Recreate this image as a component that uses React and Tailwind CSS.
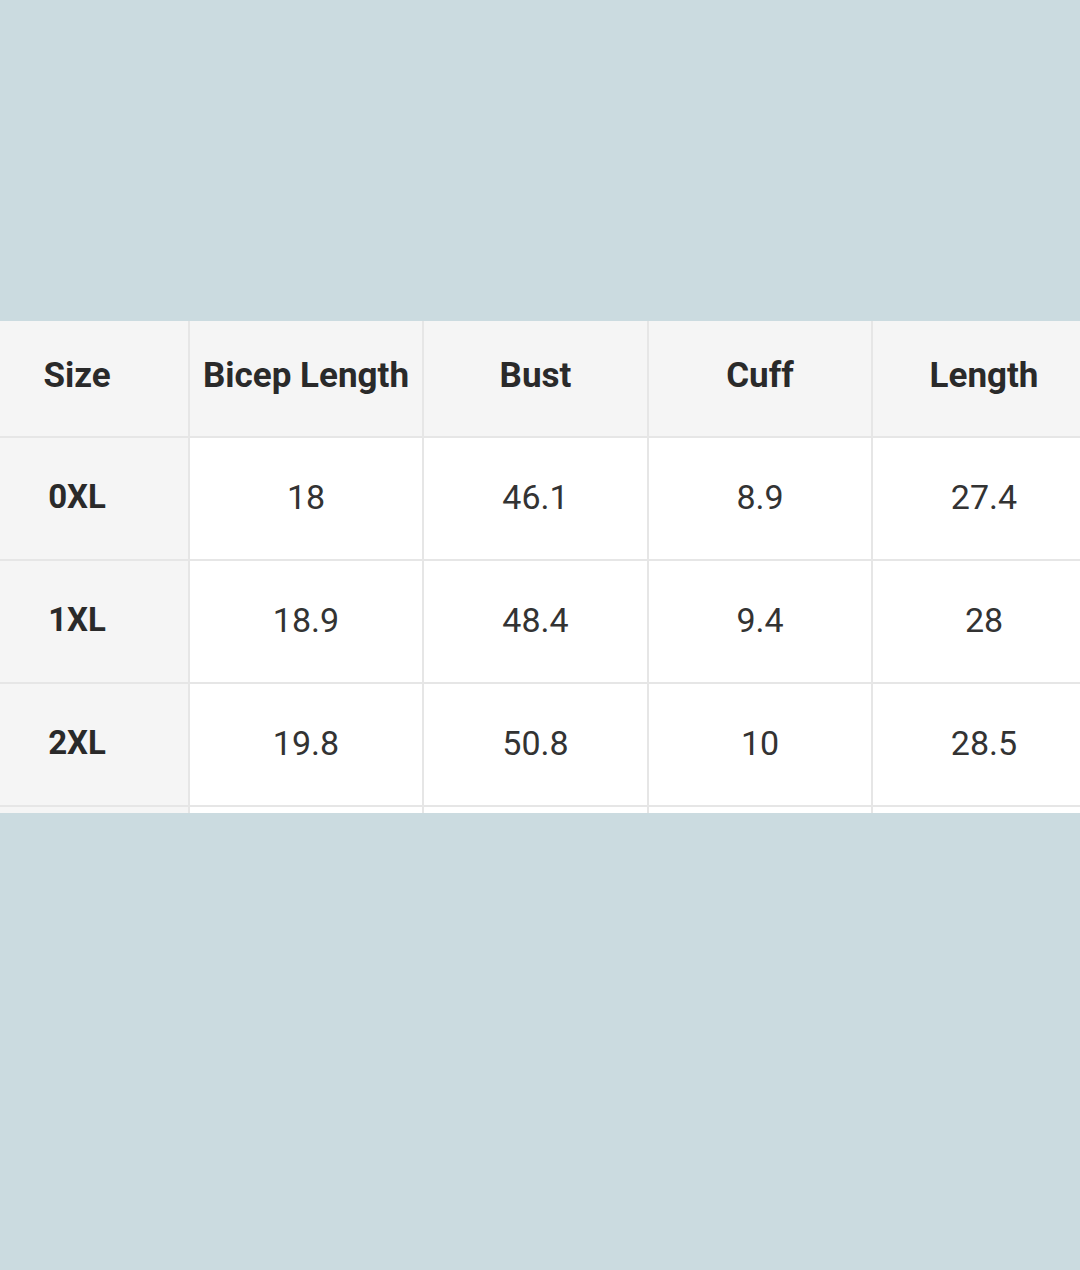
import React from 'react';

const columns = ['Size', 'Bicep Length', 'Bust', 'Cuff', 'Length'];

const rows = [
  ['0XL', '18', '46.1', '8.9', '27.4'],
  ['1XL', '18.9', '48.4', '9.4', '28'],
  ['2XL', '19.8', '50.8', '10', '28.5'],
];

const widths = ['w-[224px]', 'w-[234px]', 'w-[225px]', 'w-[224px]', 'w-[224px]'];

export default function App() {
  return (
    <div className="min-h-[1270px] w-full bg-[#cbdbe0] overflow-hidden" style={{ fontFamily: 'Roboto, "Liberation Sans", sans-serif' }}>
      <div className="pt-[321px]">
        <div className="h-[492px] overflow-hidden bg-white">
          <table className="ml-[-36px] border-collapse table-fixed w-[1131px] text-[#2a2a2a]">
            <colgroup>
              {widths.map((w, i) => (
                <col key={i} className={w} />
              ))}
            </colgroup>
            <thead>
              <tr className="h-[116px] bg-[#f5f5f5]">
                {columns.map((c) => (
                  <th key={c} className="border-x-2 border-b-2 border-[#e6e6e6] pb-[4px] text-[35px] font-bold">
                    {c}
                  </th>
                ))}
              </tr>
            </thead>
            <tbody>
              {rows.map((r) => (
                <tr key={r[0]} className="h-[123px]">
                  {r.map((v, i) => (
                    <td
                      key={i}
                      className={
                        i === 0
                          ? 'border-2 border-[#e6e6e6] bg-[#f5f5f5] pb-[3px] text-center text-[33px] font-bold'
                          : 'border-2 border-[#e6e6e6] bg-white pb-[3px] text-center text-[34px] text-[#333]'
                      }
                    >
                      {v}
                    </td>
                  ))}
                </tr>
              ))}
              <tr className="h-[20px]">
                {columns.map((c, i) => (
                  <td key={c} className={i === 0 ? 'border-2 border-[#e6e6e6] bg-[#f5f5f5]' : 'border-2 border-[#e6e6e6] bg-white'} />
                ))}
              </tr>
            </tbody>
          </table>
        </div>
      </div>
    </div>
  );
}
